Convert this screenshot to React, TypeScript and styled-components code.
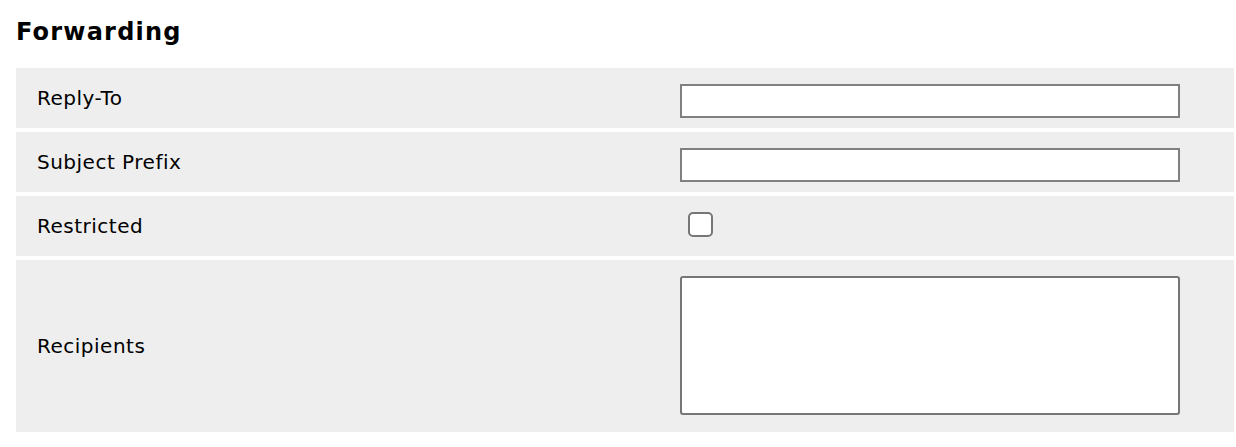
import styled, { createGlobalStyle } from "styled-components";

const GlobalStyle = createGlobalStyle`
  body {
    margin: 0;
    background: #ffffff;
    font-family: "DejaVu Sans", Verdana, sans-serif;
    color: #000000;
  }
`;

const Page = styled.div`
  padding: 18px 2px 0 16px;
`;

const Title = styled.h2`
  margin: 0 0 22px 0;
  font-size: 24px;
  line-height: 28px;
  font-weight: 700;
  letter-spacing: 1.2px;
`;

const Table = styled.div`
  display: flex;
  flex-direction: column;
  gap: 4px;
`;

const Row = styled.div`
  display: grid;
  grid-template-columns: 664px 1fr;
  min-height: 60px;
  background-color: #eeeeee;
`;

const Label = styled.label`
  align-self: center;
  padding-left: 21px;
  font-size: 20px;
  letter-spacing: 0.5px;
  line-height: 24px;
`;

const Field = styled.div<{ $bottom?: number }>`
  display: flex;
  align-items: flex-start;
  padding: 16px 0 ${(props) => props.$bottom ?? 10}px 0;
`;

const TextInput = styled.input`
  width: 500px;
  height: 34px;
  box-sizing: border-box;
  margin: 0;
  border: 2px solid #808080;
  border-radius: 0;
  background: #ffffff;
  font-family: inherit;
  font-size: 16px;
  outline: none;
`;

const CheckBox = styled.input`
  appearance: none;
  width: 25px;
  height: 25px;
  box-sizing: border-box;
  margin: 0 0 0 8px;
  border: 2px solid #767676;
  border-radius: 5px;
  background: #ffffff;
`;

const TextArea = styled.textarea`
  width: 500px;
  height: 139px;
  box-sizing: border-box;
  margin: 0;
  border: 2px solid #767676;
  border-radius: 3px;
  background: #ffffff;
  resize: none;
  font-family: inherit;
  outline: none;
`;

function App() {
  return (
    <Page>
      <GlobalStyle />
      <Title>Forwarding</Title>
      <Table>
        <Row>
          <Label>Reply-To</Label>
          <Field>
            <TextInput type="text" />
          </Field>
        </Row>
        <Row>
          <Label>Subject Prefix</Label>
          <Field>
            <TextInput type="text" />
          </Field>
        </Row>
        <Row>
          <Label>Restricted</Label>
          <Field>
            <CheckBox type="checkbox" />
          </Field>
        </Row>
        <Row>
          <Label>Recipients</Label>
          <Field $bottom={17}>
            <TextArea />
          </Field>
        </Row>
      </Table>
    </Page>
  );
}

export default App;
